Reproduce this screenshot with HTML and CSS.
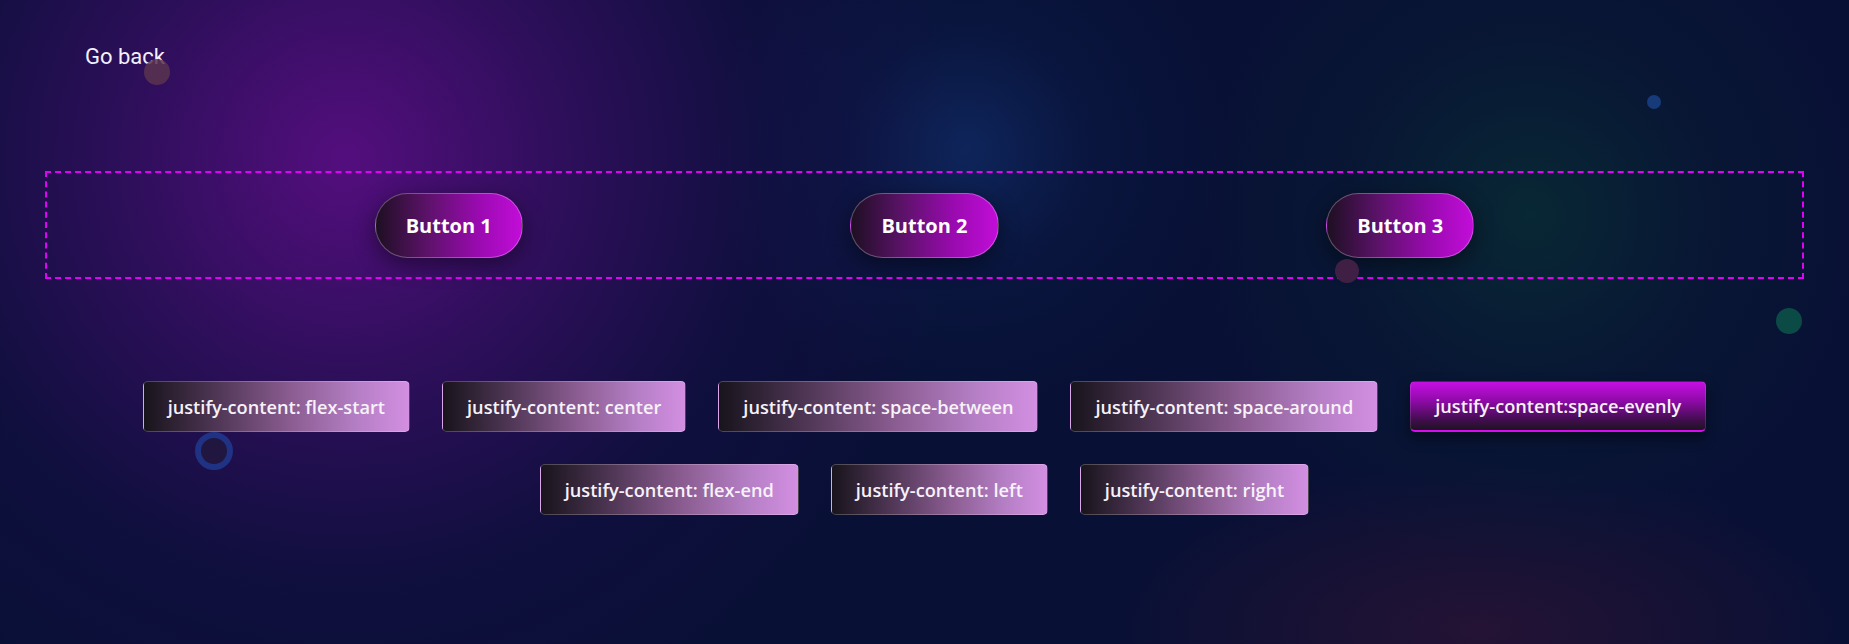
FILE: index.html
```html
<!DOCTYPE html>
<html lang="en">
<head>
<meta charset="utf-8">
<title>Justify content</title>
<link rel="stylesheet" href="styles.css">
</head>
<body>
<div class="page">
  <span class="dot dot-red1"></span>
  <span class="dot dot-blue"></span>
  <span class="dot dot-red2"></span>
  <span class="dot dot-green"></span>
  <span class="dot ring"></span>

  <header class="top">
    <a class="back" href="#">Go back</a>
  </header>

  <section class="stage">
    <button class="pill">Button 1</button>
    <button class="pill">Button 2</button>
    <button class="pill">Button 3</button>
  </section>

  <nav class="options">
    <button class="opt">justify-content: flex-start</button>
    <button class="opt">justify-content: center</button>
    <button class="opt">justify-content: space-between</button>
    <button class="opt">justify-content: space-around</button>
    <button class="opt active">justify-content:space-evenly</button>
    <button class="opt">justify-content: flex-end</button>
    <button class="opt">justify-content: left</button>
    <button class="opt">justify-content: right</button>
  </nav>
</div>
</body>
</html>
```

FILE: styles.css
```css
* { box-sizing: border-box; }

html, body {
  margin: 0;
  padding: 0;
}

body {
  width: 1849px;
  height: 644px;
  overflow: hidden;
  background-color: #081035;
  font-family: "Open Sans", "Noto Sans", sans-serif;
}

.page {
  position: relative;
  width: 1849px;
  height: 644px;
  background:
    radial-gradient(circle at 345px 160px, rgba(88, 14, 130, 0.95) 0, rgba(70, 14, 115, 0.6) 220px, rgba(40, 12, 90, 0.25) 420px, rgba(8, 16, 53, 0) 620px),
    radial-gradient(circle at 967px 150px, rgba(16, 42, 100, 0.8) 0, rgba(12, 32, 80, 0.35) 120px, rgba(8, 16, 53, 0) 260px),
    radial-gradient(circle at 1530px 215px, rgba(8, 48, 52, 0.75) 0, rgba(8, 38, 52, 0.3) 180px, rgba(8, 16, 53, 0) 360px),
    radial-gradient(ellipse 380px 170px at 1480px 630px, rgba(48, 20, 52, 0.7) 0, rgba(8, 16, 53, 0) 100%),
    #081035;
}

.top {
  padding: 45px 0 0 85px;
  height: 69px;
}

.back {
  font-family: Roboto, "Liberation Sans", sans-serif;
  font-size: 22px;
  line-height: 24px;
  color: #f2f0fb;
  text-decoration: none;
  position: relative;
  z-index: 2;
}

.stage {
  margin: 102px 45px 0;
  height: 108px;
  border: 2px dashed #e300fb;
  display: flex;
  align-items: center;
  justify-content: space-evenly;
  position: relative;
  z-index: 1;
}

.pill {
  height: 65px;
  padding: 0 30px;
  border-radius: 33px;
  border: 1px solid rgba(255, 255, 255, 0.28);
  background: linear-gradient(to right, #1d0f22 0%, #5c1269 35%, #9a0ab0 70%, #c20dd9 100%);
  color: #ffffff;
  font-family: "Open Sans", "Noto Sans", sans-serif;
  font-weight: 700;
  font-size: 20px;
  box-shadow: 0 6px 22px rgba(0, 0, 0, 0.45);
  cursor: pointer;
}

.options {
  margin: 86px auto 0;
  max-width: 1700px;
  display: flex;
  flex-wrap: wrap;
  justify-content: center;
  position: relative;
  z-index: 1;
}

.opt {
  margin: 16px;
  height: 51px;
  padding: 0 24px;
  border-radius: 5px;
  border: 1px solid rgba(255, 255, 255, 0.22);
  background: linear-gradient(to right, #18141c 0%, #4a3350 25%, #8a5c90 55%, #b47ec4 80%, #d38fe2 100%);
  color: #f7f2fa;
  font-family: "Open Sans", "Noto Sans", sans-serif;
  font-weight: 600;
  font-size: 18.2px;
  letter-spacing: 0;
  cursor: pointer;
}

.opt.active {
  background: linear-gradient(to bottom, #c60fe2 0%, #8d0aa6 40%, #4a0c58 75%, #1c1420 100%);
  border: 1px solid rgba(255, 255, 255, 0.12);
  border-bottom: 2px solid #d80cf0;
  box-shadow: 0 6px 14px rgba(0, 0, 0, 0.45);
}

.dot {
  position: absolute;
  border-radius: 50%;
  z-index: 0;
}

.dot-red1 {
  left: 144px; top: 59px;
  width: 26px; height: 26px;
  background: #5b344f;
  z-index: 3;
  opacity: 0.85;
}

.dot-blue {
  left: 1647px; top: 95px;
  width: 14px; height: 14px;
  background: #173a7a;
}

.dot-red2 {
  left: 1335px; top: 259px;
  width: 24px; height: 24px;
  background: #3f2044;
  z-index: 2;
}

.dot-green {
  left: 1776px; top: 308px;
  width: 26px; height: 26px;
  background: #0b4a45;
}

.ring {
  left: 195px; top: 432px;
  width: 38px; height: 38px;
  border: 6px solid #1f3284;
  background: #20163f;
}
```
